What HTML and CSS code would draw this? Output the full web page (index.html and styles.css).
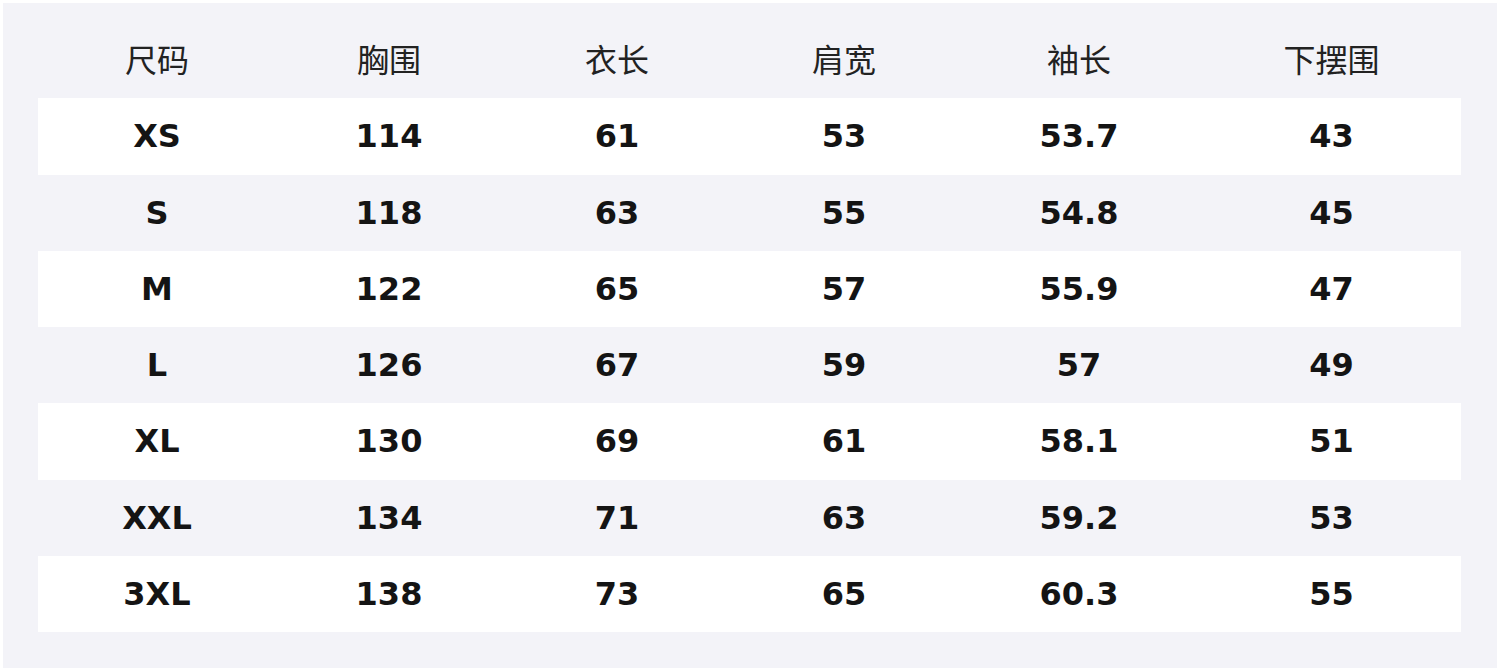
FILE: index.html
```html
<!DOCTYPE html>
<html lang="zh">
<head>
<meta charset="utf-8">
<link rel="stylesheet" href="styles.css">
</head>
<body>
<div class="panel">
  <div class="table">
    <div class="row head"><div>尺码</div><div>胸围</div><div>衣长</div><div>肩宽</div><div>袖长</div><div>下摆围</div></div>
    <div class="row alt"><div>XS</div><div>114</div><div>61</div><div>53</div><div>53.7</div><div>43</div></div>
    <div class="row"><div>S</div><div>118</div><div>63</div><div>55</div><div>54.8</div><div>45</div></div>
    <div class="row alt"><div>M</div><div>122</div><div>65</div><div>57</div><div>55.9</div><div>47</div></div>
    <div class="row"><div>L</div><div>126</div><div>67</div><div>59</div><div>57</div><div>49</div></div>
    <div class="row alt"><div>XL</div><div>130</div><div>69</div><div>61</div><div>58.1</div><div>51</div></div>
    <div class="row"><div>XXL</div><div>134</div><div>71</div><div>63</div><div>59.2</div><div>53</div></div>
    <div class="row alt"><div>3XL</div><div>138</div><div>73</div><div>65</div><div>60.3</div><div>55</div></div>
  </div>
</div>
</body>
</html>
```
FILE: styles.css
```css
html, body {
  margin: 0;
  padding: 0;
  background: #ffffff;
}
body {
  width: 1500px;
  height: 672px;
  overflow: hidden;
}
.panel {
  margin: 3px;
  width: 1494px;
  height: 665px;
  box-sizing: border-box;
  background: #f3f3f8;
  padding: 19px 0 0 35px;
}
.table {
  width: 1423px;
  display: flex;
  flex-direction: column;
}
.row {
  display: grid;
  grid-template-columns: 238px 226px 230px 224px 246px 259px;
  height: 76.25px;
  align-items: center;
  justify-items: center;
  font-family: "DejaVu Sans", "Noto Sans CJK SC", sans-serif;
  font-weight: bold;
  font-size: 32px;
  color: #141414;
}
.row.alt {
  background: #ffffff;
}
.row.head {
  font-family: "Noto Sans CJK SC", sans-serif;
  font-weight: normal;
  font-size: 32px;
  color: #222222;
}
.row.head > div {
  padding-bottom: 4px;
}
```
